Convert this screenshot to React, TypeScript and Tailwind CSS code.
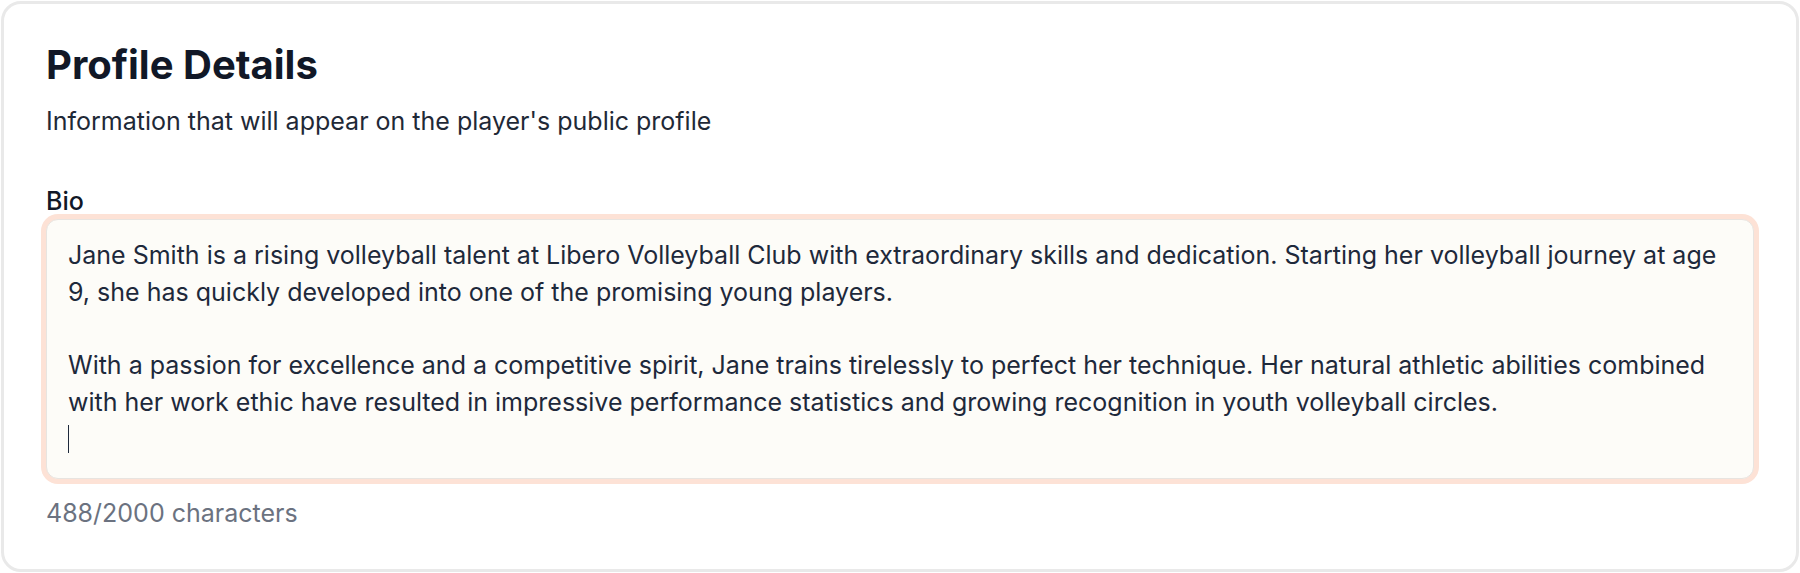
const bio = `Jane Smith is a rising volleyball talent at Libero Volleyball Club with extraordinary skills and dedication. Starting her volleyball journey at age 9, she has quickly developed into one of the promising young players.

With a passion for excellence and a competitive spirit, Jane trains tirelessly to perfect her technique. Her natural athletic abilities combined with her work ethic have resulted in impressive performance statistics and growing recognition in youth volleyball circles.
`;

export default function App() {
  return (
    <div className="h-[573px] w-full bg-white p-px font-['Inter',sans-serif]">
      <section className="flex h-full flex-col rounded-[20px] border-[3px] border-[#e9e9e9] bg-white px-[42px] pt-[37px]">
        <h1 className="text-[40px] leading-[48px] font-bold text-[#111827]">Profile Details</h1>
        <p className="mt-[18px] text-[25px] leading-[28px] text-[#1f2937]">
          Information that will appear on the player's public profile
        </p>

        <label className="mt-[52px] text-[25px] leading-[28px] font-medium text-[#111827]">Bio</label>
        <div className="mt-[4px] rounded-[12px] border border-[#e8e4e0] bg-[#fdfcf8] pt-[17px] pr-[24px] pb-[20px] pl-[21px] shadow-[0_0_0_5px_#fde2d6]">
          <div className="whitespace-pre-wrap text-[25px] leading-[36.7px] text-[#1e293b]">
            {bio}
            <span className="inline-block h-[28px] w-px translate-y-[4px] bg-[#1e293b]" />
          </div>
        </div>
        <p className="mt-[20px] text-[25px] leading-[28px] text-[#6b7280]">488/2000 characters</p>
      </section>
    </div>
  );
}
